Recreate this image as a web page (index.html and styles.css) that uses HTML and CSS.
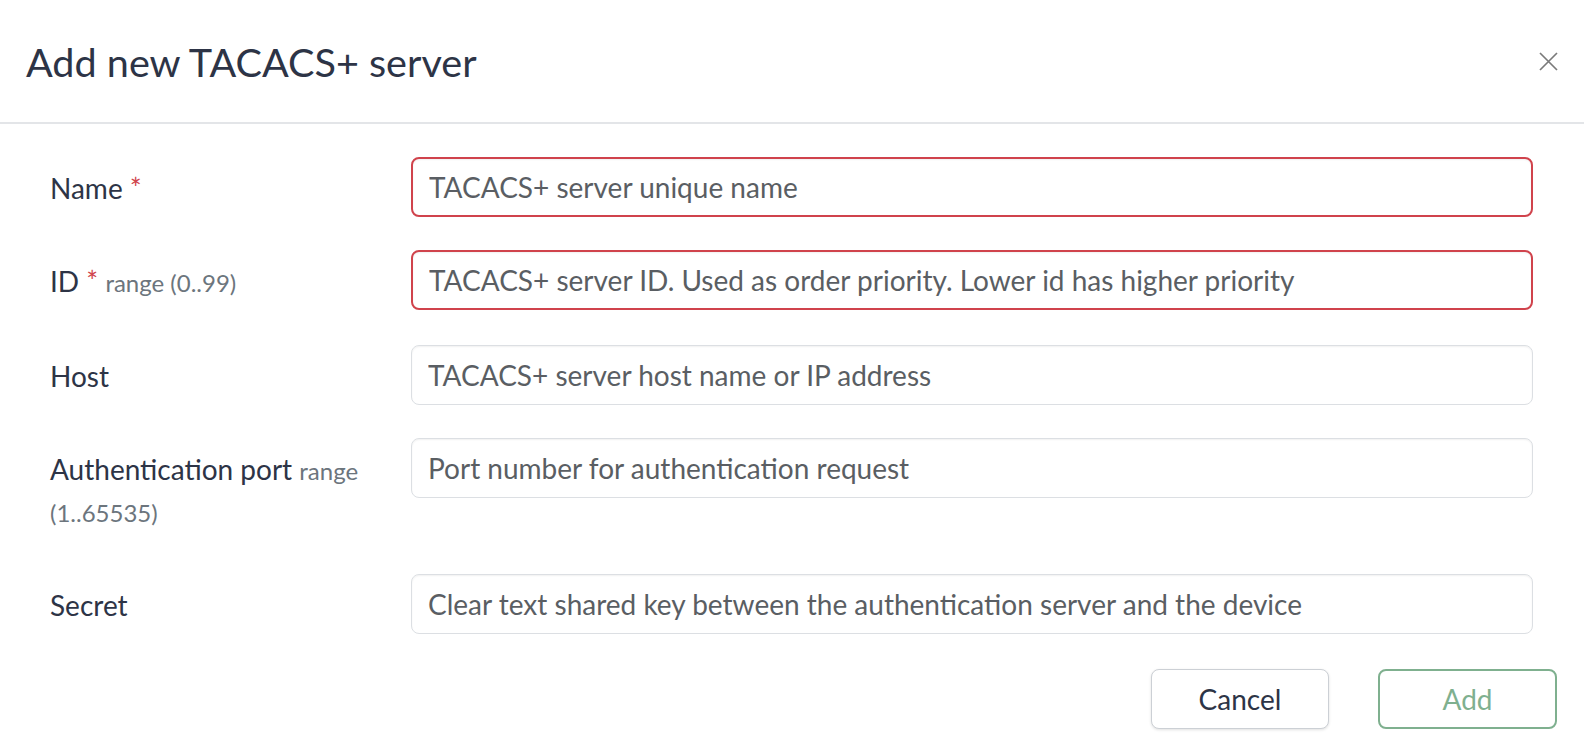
FILE: index.html
```html
<!DOCTYPE html>
<html lang="en">
<head>
<meta charset="utf-8">
<title>Add new TACACS+ server</title>
<link rel="stylesheet" href="styles.css">
</head>
<body>
<div class="modal">
  <div class="modal-header">
    <h1 class="modal-title">Add new TACACS+ server</h1>
    <button class="close" aria-label="Close">
      <svg width="19" height="19" viewBox="0 0 19 19"><path d="M1 1L18 18M18 1L1 18" stroke="#7a7a7a" stroke-width="1.7" fill="none"/></svg>
    </button>
  </div>
  <form class="modal-body">
    <div class="row">
      <label class="label">Name <span class="req">*</span></label>
      <input class="input invalid" placeholder="TACACS+ server unique name">
    </div>
    <div class="row">
      <label class="label">ID <span class="req">*</span> <span class="hint">range (0..99)</span></label>
      <input class="input invalid" placeholder="TACACS+ server ID. Used as order priority. Lower id has higher priority">
    </div>
    <div class="row">
      <label class="label">Host</label>
      <input class="input" placeholder="TACACS+ server host name or IP address">
    </div>
    <div class="row">
      <label class="label label-tall">Authentication port <span class="hint">range (1..65535)</span></label>
      <input class="input" placeholder="Port number for authentication request">
    </div>
    <div class="row">
      <label class="label">Secret</label>
      <input class="input" placeholder="Clear text shared key between the authentication server and the device">
    </div>
  </form>
  <div class="modal-footer">
    <button class="btn btn-cancel">Cancel</button>
    <button class="btn btn-add">Add</button>
  </div>
</div>
</body>
</html>
```

FILE: styles.css
```css
html, body {
  margin: 0;
  padding: 0;
  background: #ffffff;
}
body {
  font-family: Lato, "Noto Sans", sans-serif;
  color: #2d3446;
}
.modal {
  width: 1584px;
  height: 756px;
  overflow: hidden;
}
.modal-header {
  display: flex;
  align-items: center;
  justify-content: space-between;
  height: 122px;
  padding: 0 26px 0 26px;
  border-bottom: 2px solid #e3e5e8;
  box-sizing: content-box;
}
.modal-title {
  margin: 0;
  font-size: 39.6px;
  font-weight: 400;
  line-height: 48px;
  color: #2d3446;
  padding-top: 2px;
}
.close {
  background: none;
  border: 0;
  padding: 0;
  width: 19px;
  height: 19px;
  display: flex;
  cursor: pointer;
}
.modal-body {
  padding: 33px 51px 0 50px;
  display: flex;
  flex-direction: column;
  gap: 33px;
}
.row {
  display: grid;
  grid-template-columns: 345px 1fr;
  column-gap: 16px;
  align-items: start;
}
.label {
  font-size: 28px;
  line-height: 40px;
  padding: 11px 0 9px;
  color: #2d3446;
}
.label-tall {
  padding-bottom: 8px;
}
.req {
  color: #d0434c;
}
.hint {
  font-size: 24px;
  color: #6c757d;
}
.input {
  height: 60px;
  box-sizing: border-box;
  border: 1.5px solid #dcdfe3;
  border-radius: 8px;
  padding: 0 16px;
  font-family: Lato, "Noto Sans", sans-serif;
  font-size: 28px;
  color: #2d3446;
  background: #fff;
  box-shadow: inset 0 1px 2px rgba(0, 0, 0, 0.06);
  outline: none;
}
.input::placeholder {
  color: #5a5e63;
  opacity: 1;
}
.input.invalid {
  border: 2px solid #d0434c;
}
.modal-footer {
  display: flex;
  justify-content: flex-end;
  gap: 49px;
  padding: 35px 27px 0 0;
}
.btn {
  width: 179px;
  height: 60px;
  border-radius: 8px;
  background: #fff;
  font-family: Lato, "Noto Sans", sans-serif;
  font-size: 28px;
  cursor: pointer;
}
.btn-cancel {
  border: 1.5px solid #ccd0d5;
  color: #2d3446;
  box-shadow: 0 1px 3px rgba(0, 0, 0, 0.12);
  width: 178px;
}
.btn-add {
  border: 2px solid #7fb08f;
  color: #7fb08f;
}
```
